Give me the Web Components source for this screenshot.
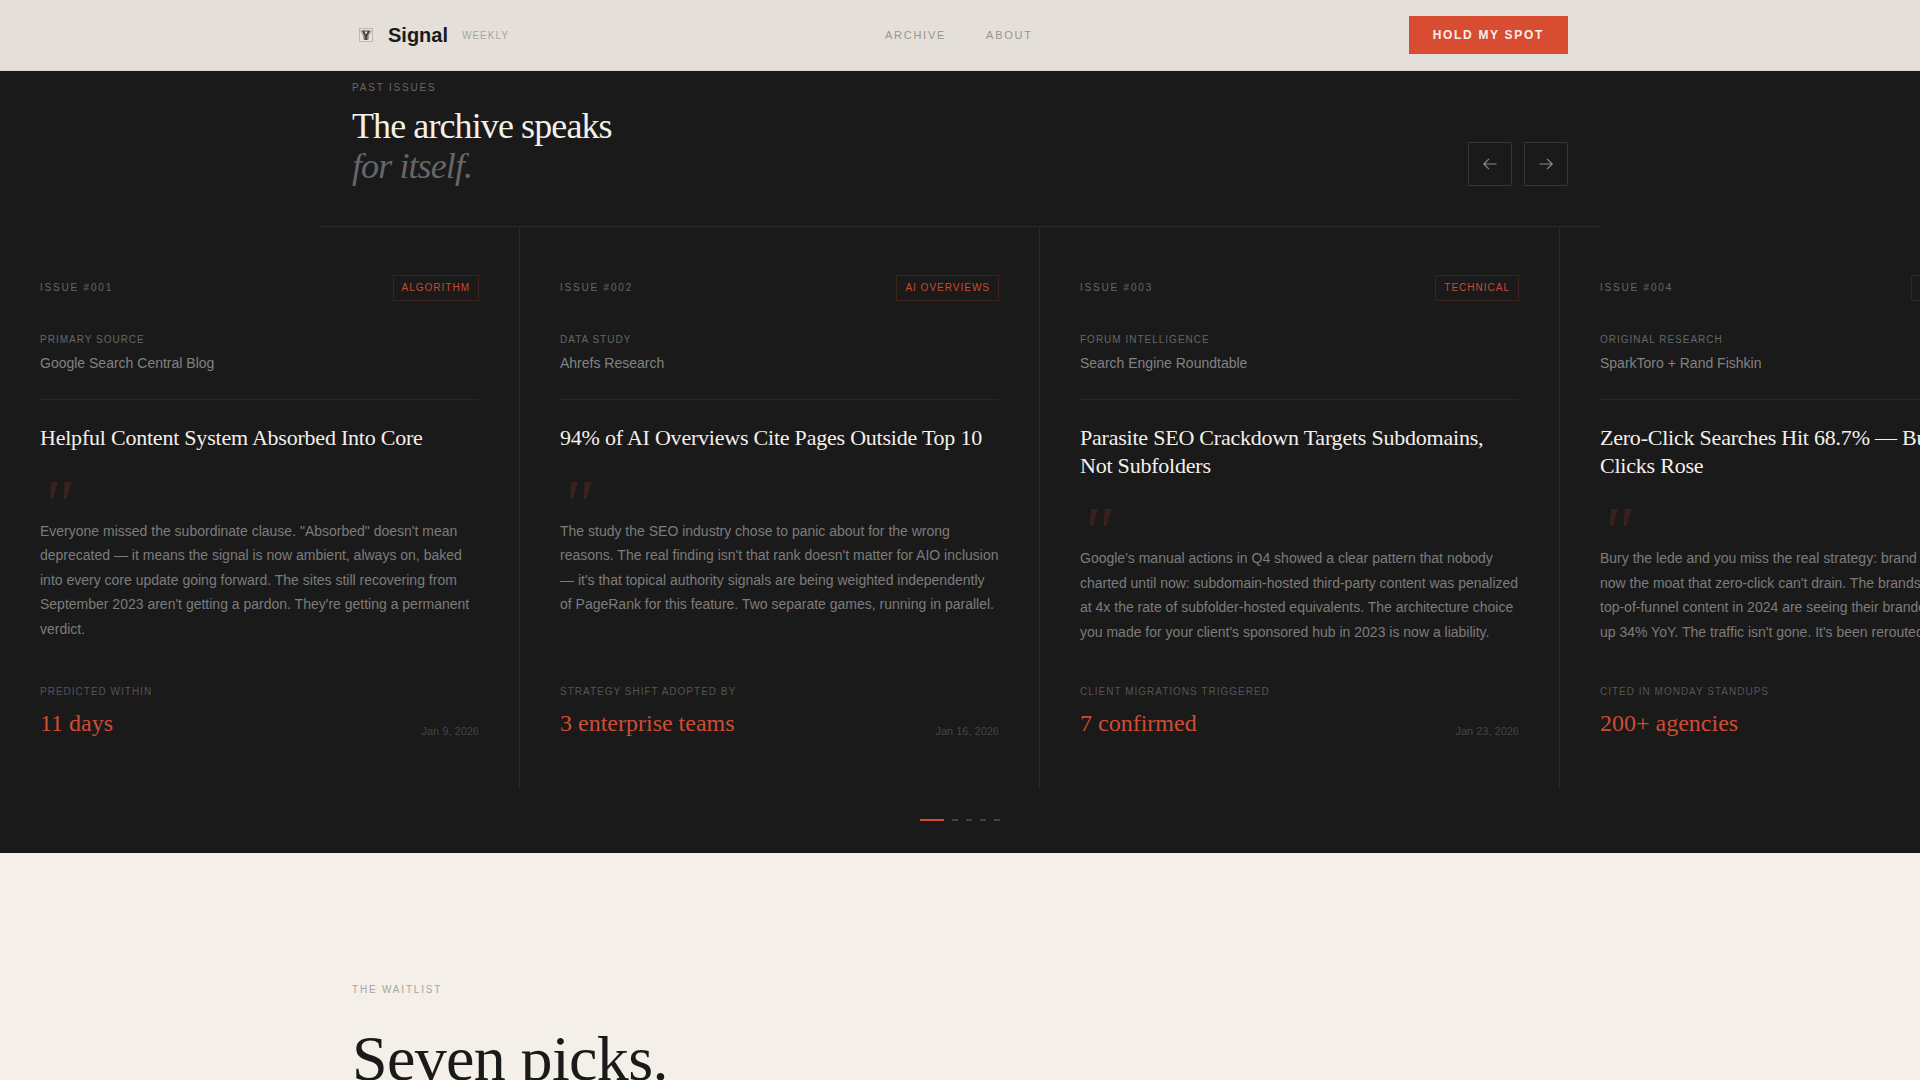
<!DOCTYPE html>
<html lang="en"><head><meta charset="utf-8"><title>Signal Weekly</title>
<style>
html,body{margin:0;padding:0;height:1080px;overflow:hidden;background:#f4efe9;font-family:"Liberation Sans",Arial,sans-serif}
</style></head><body>
<site-nav></site-nav>
<archive-section>
  <issue-card issue="ISSUE #001" tag="ALGORITHM" kind="PRIMARY SOURCE" source="Google Search Central Blog" metric="PREDICTED WITHIN" value="11 days" date="Jan 9, 2026">
    <span slot="title">Helpful Content System Absorbed Into Core</span>
    Everyone missed the subordinate clause. "Absorbed" doesn't mean deprecated — it means the signal is now ambient, always on, baked into every core update going forward. The sites still recovering from September 2023 aren't getting a pardon. They're getting a permanent verdict.
  </issue-card>
  <issue-card issue="ISSUE #002" tag="AI OVERVIEWS" kind="DATA STUDY" source="Ahrefs Research" metric="STRATEGY SHIFT ADOPTED BY" value="3 enterprise teams" date="Jan 16, 2026">
    <span slot="title">94% of AI Overviews Cite Pages Outside Top 10</span>
    The study the SEO industry chose to panic about for the wrong reasons. The real finding isn't that rank doesn't matter for AIO inclusion — it's that topical authority signals are being weighted independently of PageRank for this feature. Two separate games, running in parallel.
  </issue-card>
  <issue-card issue="ISSUE #003" tag="TECHNICAL" kind="FORUM INTELLIGENCE" source="Search Engine Roundtable" metric="CLIENT MIGRATIONS TRIGGERED" value="7 confirmed" date="Jan 23, 2026">
    <span slot="title">Parasite SEO Crackdown Targets Subdomains, Not Subfolders</span>
    Google's manual actions in Q4 showed a clear pattern that nobody charted until now: subdomain-hosted third-party content was penalized at 4x the rate of subfolder-hosted equivalents. The architecture choice you made for your client's sponsored hub in 2023 is now a liability.
  </issue-card>
  <issue-card issue="ISSUE #004" tag="SEARCH BEHAVIOR" kind="ORIGINAL RESEARCH" source="SparkToro + Rand Fishkin" metric="CITED IN MONDAY STANDUPS" value="200+ agencies" date="Jan 30, 2026">
    <span slot="title">Zero-Click Searches Hit 68.7% — But Branded Clicks Rose</span>
    Bury the lede and you miss the real strategy: brand search is<br>now the moat that zero-click can't drain. The brands that funded<br>top-of-funnel content in 2024 are seeing their branded search<br>up 34% YoY. The traffic isn't gone. It's been rerouted.
  </issue-card>
</archive-section>
<waitlist-section></waitlist-section>
<script>
const def=(name,html,init)=>customElements.define(name,class extends HTMLElement{
  constructor(){super();this.attachShadow({mode:'open'}).innerHTML=html;}
  connectedCallback(){init&&init(this,this.shadowRoot);}
});
def('site-nav',`<style>
:host{display:block;background:#e4dfd9;border-bottom:1px solid #dcd8d1;height:70px;box-sizing:content-box}
.in{width:1216px;height:70px;margin:0 auto;display:flex;align-items:center;justify-content:space-between}
.brand{display:flex;align-items:center}
.mark{width:28px;height:28px;display:flex;align-items:center;justify-content:center;margin-right:8px}
.name{font-size:20px;font-weight:700;color:#1a1a1a}
.wk{font-size:10px;letter-spacing:.1em;color:#a8a49d;margin-left:14px;margin-top:1px}
.links{display:flex;gap:40px;font-size:11px;letter-spacing:.16em;color:#99958e}
.cta{background:#d84c32;color:#f8efe9;font-size:12px;font-weight:700;letter-spacing:.14em;height:38px;line-height:38px;padding:0 24px;}
</style><div class="in">
<div class="brand"><span class="mark"><svg width="14" height="14" viewBox="0 0 14 14"><rect x=".5" y=".5" width="13" height="13" fill="#ebe3d8" stroke="#c4b6a6"/><path d="M2.6 2.4h8.8L8.6 8v4H5.4V8z" fill="#4a443d"/><path d="M5.4 3.4h3.2L7 6.6z" fill="#ece6dc"/><path d="M1.6 2.6 4.6 8v3.6M12.4 2.6 9.4 8v3.6" fill="none" stroke="#8d8175" stroke-width=".8"/></svg></span><span class="name">Signal</span><span class="wk">WEEKLY</span></div>
<div class="links"><span>ARCHIVE</span><span>ABOUT</span></div>
<div class="cta">HOLD MY SPOT</div></div>`);
def('arrow-btn',`<style>
:host{display:flex;width:44px;height:44px;box-sizing:border-box;border:1px solid #363636;align-items:center;justify-content:center;border-radius:1px}
svg{display:block}
</style><svg width="16" height="16" viewBox="0 0 16 16" fill="none" stroke="#8a8a8a" stroke-width="1.2"><path d=""/></svg>`,(el,root)=>{
  root.querySelector('path').setAttribute('d',el.getAttribute('dir')==='left'?'M14.5 8H2M7 2.8 1.8 8 7 13.2':'M1.5 8H14M9 2.8 14.2 8 9 13.2');
});
def('archive-section',`<style>
:host{display:block;background:#1a1a1a;height:782px;overflow:hidden}
.head{width:1216px;margin:0 auto;border-bottom:1px solid #2a2a2a;display:flex;justify-content:space-between;align-items:flex-end;height:115px;padding:0 32px 40px;box-sizing:content-box}
.lab{font-size:10px;letter-spacing:.18em;color:#666;line-height:16px;margin-top:9px;margin-bottom:10px}
h2{margin:0;font:400 36px/40px "Liberation Serif","Times New Roman",serif;letter-spacing:-.025em;color:#f4f0ea}
em{display:block;color:#666;font-style:italic}
.head>div:first-child{align-self:flex-start}
.btns{display:flex;gap:12px}
.track{display:flex;align-items:stretch;width:1920px;overflow:hidden}
.dots{display:flex;justify-content:center;gap:8px;margin-top:31px}
.dots i{display:block;width:6px;height:2px;background:#444}
.dots i:first-child{width:24px;background:#d84c32}
</style>
<div class="head"><div><div class="lab">PAST ISSUES</div><h2>The archive speaks<em>for itself.</em></h2></div>
<div class="btns"><arrow-btn dir="left"></arrow-btn><arrow-btn dir="right"></arrow-btn></div></div>
<div class="track"><slot></slot></div>
<div class="dots"><i></i><i></i><i></i><i></i><i></i></div>`);
def('issue-card',`<style>
:host{display:flex;flex:0 0 520px;width:520px;box-sizing:border-box;flex-direction:column;padding:48px 40px 45.5px 40px;border-right:1px solid #2a2a2a}
.top{display:flex;justify-content:space-between;align-items:center;margin-bottom:31px}
.iss{font-size:10px;letter-spacing:.18em;color:#666;margin-bottom:1px}
.tag{font-size:10px;letter-spacing:.1em;color:#c94a32;line-height:16px;padding:4px 8px;border:1px solid rgba(216,76,50,.2);white-space:nowrap;flex:none}
.kind{font-size:10px;letter-spacing:.1em;color:#666;line-height:16px;margin-bottom:4px}
.src{font-size:14px;line-height:22.4px;color:#828282;padding-bottom:25px;border-bottom:1px solid #282828;margin-bottom:23.7px}
.ttl{font:400 22px/27.5px "Liberation Serif","Times New Roman",serif;letter-spacing:-.01em;color:#f4f0ea}
.q{font:italic 400 72px/30px "Liberation Serif","Times New Roman",serif;color:#d84c32;opacity:.16;height:29px;padding-top:38px;margin-left:1px}
.body{font-size:14px;line-height:24.5px;color:#7c7c7c}
.foot{margin-top:auto;padding-top:39.5px;display:flex;justify-content:space-between;align-items:flex-end}
.m{font-size:10px;letter-spacing:.1em;color:#555;line-height:16px;margin-bottom:4px}
.v{font:400 24px/38.4px "Liberation Serif","Times New Roman",serif;color:#d04c34}
.d{font-size:11px;color:#444;line-height:18px;margin-bottom:2px}
</style>
<div class="top"><span class="iss" id="iss"></span><span class="tag" id="tag"></span></div>
<div class="kind" id="kind"></div><div class="src" id="source"></div>
<div class="ttl"><slot name="title"></slot></div>
<div class="q">"</div>
<div class="body"><slot></slot></div>
<div class="foot"><div><div class="m" id="metric"></div><div class="v" id="value"></div></div><div class="d" id="date"></div></div>`,(el,root)=>{
  const map={issue:'iss',tag:'tag',kind:'kind',source:'source',metric:'metric',value:'value',date:'date'};
  for(const k in map)root.getElementById(map[k]).textContent=el.getAttribute(k);
});
def('waitlist-section',`<style>
:host{display:block;background:#f4efe9}
.in{width:1216px;margin:0 auto;padding-top:129px}
.lab{font-size:10px;letter-spacing:.18em;color:#a9a59e;line-height:16px;margin-bottom:26px}
h2{margin:0;font:400 64px/70px "Liberation Serif","Times New Roman",serif;letter-spacing:-.01em;color:#1a1a1a}
</style><div class="in"><div class="lab">THE WAITLIST</div><h2>Seven picks.</h2></div>`);
</script>
</body></html>
